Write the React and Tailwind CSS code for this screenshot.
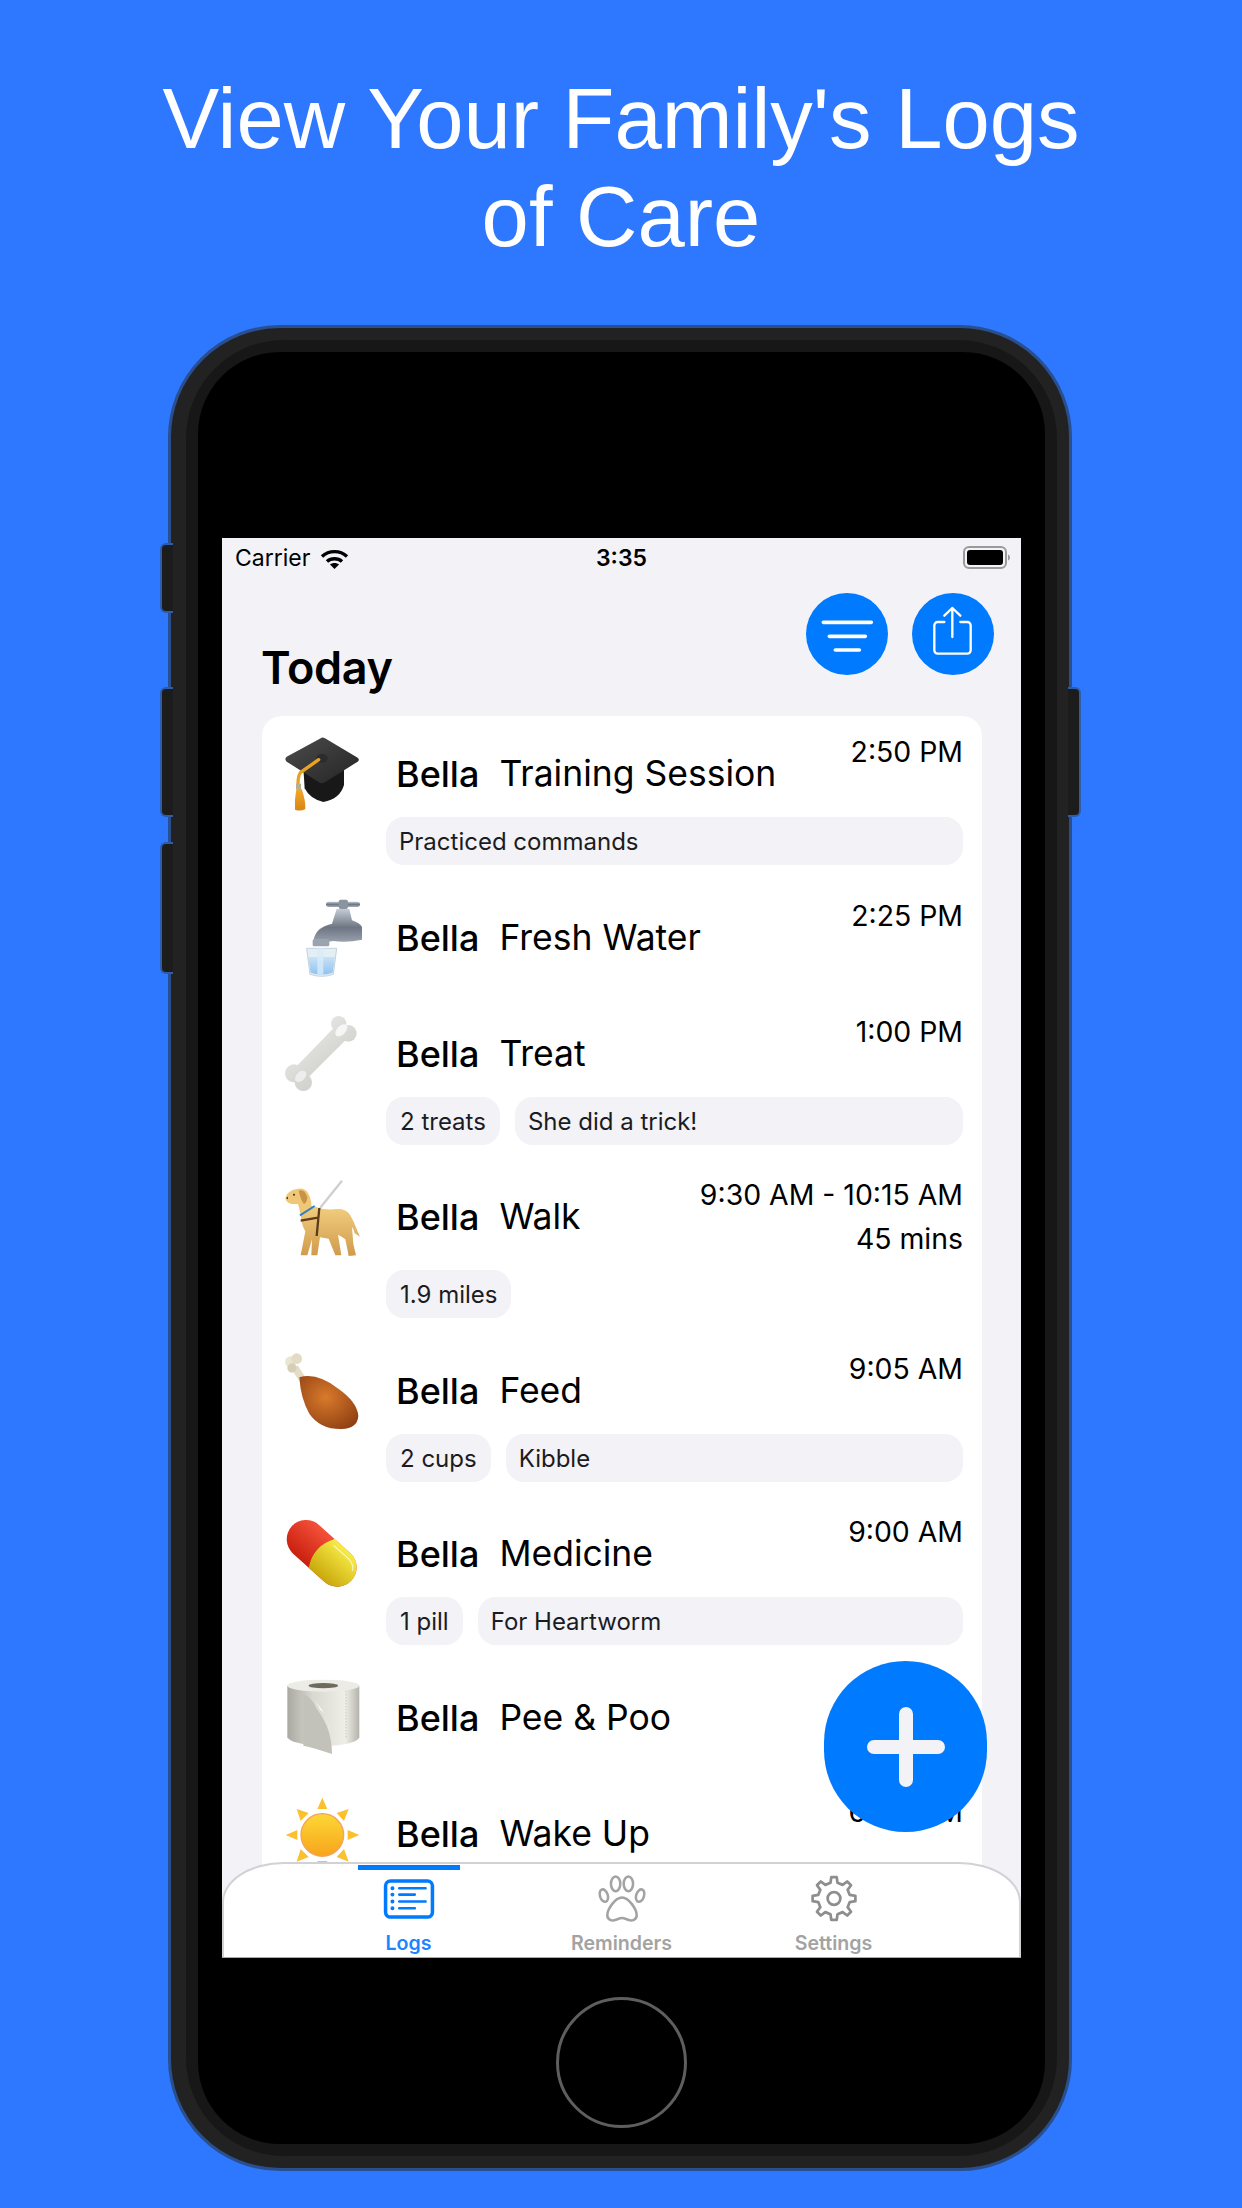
const LOGS = [
  { emoji: 'cap', title: 'Training Session', time: ['2:50 PM'], chips: ['Practiced commands'] },
  { emoji: 'water', title: 'Fresh Water', time: ['2:25 PM'], chips: [] },
  { emoji: 'bone', title: 'Treat', time: ['1:00 PM'], chips: ['2 treats', 'She did a trick!'] },
  { emoji: 'dog', title: 'Walk', time: ['9:30 AM - 10:15 AM', '45 mins'], chips: ['1.9 miles'] },
  { emoji: 'leg', title: 'Feed', time: ['9:05 AM'], chips: ['2 cups', 'Kibble'] },
  { emoji: 'pill', title: 'Medicine', time: ['9:00 AM'], chips: ['1 pill', 'For Heartworm'] },
  { emoji: 'roll', title: 'Pee & Poo', time: [], chips: [] },
  { emoji: 'sun', title: 'Wake Up', time: ['6:30 AM'], chips: [] },
]

function CapEmoji() {
  return (
    <>
      <defs>
        <linearGradient id="capTop" x1="0" y1="0" x2="1" y2="1">
          <stop offset="0" stopColor="#4c4c4c" />
          <stop offset="1" stopColor="#242424" />
        </linearGradient>
        <linearGradient id="tassel" x1="0" y1="0" x2="0" y2="1">
          <stop offset="0" stopColor="#f2a92c" />
          <stop offset="1" stopColor="#d98512" />
        </linearGradient>
      </defs>
      <path d="M100 130 L104 190 Q120 222 160 231 Q210 222 222 180 L222 130 Z" fill="#181818" />
      <path d="M155 38 Q160 37 165 40 L263 98 Q270 104 263 110 L165 172 Q155 178 147 172 L50 110 Q42 102 50 95 Z" fill="url(#capTop)" />
      <ellipse cx="156" cy="100" rx="17" ry="13" fill="#2c2c2c" />
      <path d="M146 104 L92 142 Q84 150 84 178" fill="none" stroke="#e9a324" strokeWidth="10" strokeLinecap="round" />
      <rect x="78" y="176" width="15" height="16" fill="#b7b08f" />
      <path d="M79 192 L95 192 Q107 225 106 252 Q92 260 75 254 Q73 225 79 192 Z" fill="url(#tassel)" />
    </>
  )
}

function WaterEmoji() {
  return (
    <g transform="translate(30 6)">
      <defs>
        <linearGradient id="chrome" x1="0" y1="0" x2="0" y2="1">
          <stop offset="0" stopColor="#c4ccd6" />
          <stop offset="0.5" stopColor="#6d7682" />
          <stop offset="1" stopColor="#a3acb8" />
        </linearGradient>
        <linearGradient id="glassFill" x1="0" y1="0" x2="0" y2="1">
          <stop offset="0" stopColor="#c8e2f7" />
          <stop offset="1" stopColor="#8fc3ee" />
        </linearGradient>
      </defs>
      <path d="M80 172 H170 L160 250 Q125 262 90 250 Z" fill="#e4eef5" stroke="#c5d2dc" strokeWidth="3" />
      <path d="M85 198 H165 L158 245 Q125 256 92 245 Z" fill="url(#glassFill)" />
      <rect x="112" y="172" width="18" height="78" fill="#d8ebfa" opacity="0.8" />
      <rect x="138" y="32" width="102" height="16" rx="8" fill="url(#chrome)" />
      <rect x="176" y="26" width="28" height="28" rx="6" fill="#8a93a0" />
      <path d="M170 54 H208 L216 88 Q240 96 246 108 V146 Q200 156 160 150 L144 152 V165 H102 V142 Q110 108 156 98 Z" fill="url(#chrome)" />
      <rect x="98" y="144" width="50" height="22" rx="5" fill="#9aa4b0" />
    </g>
  )
}

function BoneEmoji() {
  return (
    <>
      <defs>
        <linearGradient id="boneFill" gradientUnits="userSpaceOnUse" x1="60" y1="40" x2="240" y2="250">
          <stop offset="0" stopColor="#f0f0ee" />
          <stop offset="1" stopColor="#c4c4c0" />
        </linearGradient>
      </defs>
      <g fill="url(#boneFill)">
        <circle cx="206" cy="56" r="23" />
        <circle cx="235" cy="85" r="25" />
        <circle cx="72" cy="205" r="27" />
        <circle cx="100" cy="232" r="26" />
        <path d="M196 64 L228 104 L106 226 L74 190 Z" />
      </g>
      <ellipse cx="214" cy="76" rx="22" ry="13" fill="#fcfcfc" opacity="0.8" transform="rotate(-45 214 76)" />
      <ellipse cx="92" cy="214" rx="20" ry="13" fill="#fcfcfc" opacity="0.6" transform="rotate(-45 92 214)" />
    </>
  )
}

function DogEmoji() {
  return (
    <>
      <defs>
        <linearGradient id="dogFur" x1="0" y1="0" x2="0" y2="1">
          <stop offset="0" stopColor="#f2cd7e" />
          <stop offset="1" stopColor="#d09a4c" />
        </linearGradient>
      </defs>
      <path d="M150 120 L216 38" stroke="#cfcfcf" strokeWidth="7" />
      <path d="M92 140 L136 116 Q160 126 190 124 Q226 118 240 140 Q252 160 262 188 L270 206 L254 196 Q250 180 246 178 L250 228 L258 262 L236 264 L226 214 Q216 206 204 200 L214 262 L196 262 L176 212 L150 208 L142 262 L124 262 L126 214 L112 262 L92 262 L106 190 Q94 170 92 140 Z" fill="url(#dogFur)" />
      <path d="M46 92 L50 80 Q62 66 78 64 Q100 56 112 72 Q124 90 124 112 L132 122 L92 144 Q88 120 84 108 L66 108 Q52 106 46 92 Z" fill="#eec777" />
      <path d="M86 68 Q104 62 112 88 Q110 106 102 108 Q92 96 86 68 Z" fill="#c99347" />
      <circle cx="72" cy="80" r="3" fill="#3c2a12" />
      <path d="M48 90 L54 86 L54 94 Z" fill="#3c2a12" />
      <path d="M90 142 L134 114" stroke="#2f7fc4" strokeWidth="6" fill="none" />
      <path d="M92 158 L148 148 M148 120 L140 204" stroke="#5c3c1a" strokeWidth="7" fill="none" />
    </>
  )
}

function LegEmoji() {
  return (
    <>
      <defs>
        <radialGradient id="legMeat" cx="0.45" cy="0.4" r="0.7">
          <stop offset="0" stopColor="#d97a2c" />
          <stop offset="1" stopColor="#8e3f12" />
        </radialGradient>
      </defs>
      <path d="M100 116 L74 76" stroke="#e4dcc6" strokeWidth="22" />
      <circle cx="62" cy="60" r="17" fill="#ece5d2" />
      <circle cx="80" cy="50" r="16" fill="#e2dbc6" />
      <circle cx="66" cy="78" r="14" fill="#d6cfb8" />
      <path d="M88 106 Q140 90 205 140 Q262 180 265 222 Q262 260 215 261 Q150 262 118 215 Q92 170 88 106 Z" fill="url(#legMeat)" />
    </>
  )
}

function PillEmoji() {
  return (
    <>
      <defs>
        <linearGradient id="pillRed" x1="0" y1="0" x2="0" y2="1">
          <stop offset="0" stopColor="#f4513a" />
          <stop offset="1" stopColor="#c9200e" />
        </linearGradient>
        <linearGradient id="pillYellow" x1="0" y1="0" x2="0" y2="1">
          <stop offset="0" stopColor="#f7ec48" />
          <stop offset="1" stopColor="#c9a80c" />
        </linearGradient>
      </defs>
      <g transform="translate(155 145) rotate(42)">
        <rect x="-121" y="-58" width="242" height="116" rx="58" fill="url(#pillRed)" />
        <path d="M0 -58 Q-35 0 0 58 H63 A58 58 0 0 0 63 -58 Z" fill="url(#pillYellow)" />
        <path d="M10 -42 H70 Q96 -40 104 -22" fill="none" stroke="#fff" strokeWidth="4" opacity="0.6" />
      </g>
    </>
  )
}

function RollEmoji() {
  return (
    <>
      <defs>
        <linearGradient id="rollSide" x1="0" y1="0" x2="1" y2="0">
          <stop offset="0" stopColor="#a9a9a1" />
          <stop offset="0.35" stopColor="#d8d8d0" />
          <stop offset="0.8" stopColor="#efefe8" />
          <stop offset="1" stopColor="#b4b4ac" />
        </linearGradient>
      </defs>
      <path d="M52 50 V205 Q60 225 160 232 Q260 228 268 205 V50 Z" fill="url(#rollSide)" />
      <ellipse cx="160" cy="50" rx="108" ry="18" fill="#ecece6" />
      <ellipse cx="160" cy="50" rx="44" ry="8" fill="#6e6a5e" />
      <path d="M100 74 Q130 90 140 120 Q150 130 170 170 Q186 210 186 255 Q130 236 100 230 Z" fill="#c2c2ba" />
      <path d="M118 76 Q140 100 150 122 Q170 130 182 200 Q176 140 142 104 Z" fill="#f8f8f4" />
      <path d="M228 66 V210" stroke="#c6c6be" strokeWidth="3" strokeDasharray="4 5" />
    </>
  )
}

function SunEmoji() {
  return (
    <>
      <defs>
        <linearGradient id="sunFill" x1="0" y1="0" x2="0" y2="1">
          <stop offset="0" stopColor="#fdd835" />
          <stop offset="1" stopColor="#f7a41d" />
        </linearGradient>
      </defs>
      <path d="M157 38 L172 72 H142 Z M157 262 L172 228 H142 Z M47 150 L82 135 V165 Z M268 150 L233 135 V165 Z M80 72 L116 84 L92 108 Z M236 72 L200 84 L222 108 Z M80 230 L116 216 L92 192 Z M236 230 L200 216 L222 192 Z" fill="#fbc02d" />
      <circle cx="157" cy="150" r="64" fill="url(#sunFill)" stroke="#f4a35c" strokeWidth="4" />
    </>
  )
}

const EMOJI = {
  cap: CapEmoji,
  water: WaterEmoji,
  bone: BoneEmoji,
  dog: DogEmoji,
  leg: LegEmoji,
  pill: PillEmoji,
  roll: RollEmoji,
  sun: SunEmoji,
}

function gearPath() {
  const cx = 24
  const cy = 24
  const teeth = 8
  const pts = []
  for (let i = 0; i < teeth; i++) {
    const a = (i / teeth) * Math.PI * 2 - Math.PI / 2
    const s = (Math.PI * 2) / teeth
    const at = (off, r) => {
      const t = a + off * s
      return `${(cx + Math.cos(t) * r).toFixed(2)} ${(cy + Math.sin(t) * r).toFixed(2)}`
    }
    pts.push(at(-0.28, 16.5), at(-0.16, 22), at(0.16, 22), at(0.28, 16.5))
  }
  return `M${pts.join(' L')} Z`
}

function LogRow({ log }) {
  const Emoji = EMOJI[log.emoji]
  return (
    <div className="flex min-h-[116px]">
      <div className="w-[124px] h-[116px] shrink-0 pl-[8px] pt-[9px]">
        <svg width="110" height="110" viewBox="0 0 330 330" className="overflow-visible">
          <Emoji />
        </svg>
      </div>
      <div className={log.chips.length ? 'flex-1 min-w-0 pr-[19px] pb-[14.5px]' : 'flex-1 min-w-0 pr-[19px]'}>
        <div className="flex justify-between min-h-[92px] pl-[10px]">
          <div className="flex gap-[20px] pt-[35px] text-[35.5px] leading-[46px] text-black">
            <span className="font-medium text-[36px]">Bella</span>
            <span>{log.title}</span>
          </div>
          <div className="pt-[14px] text-right text-[28.4px] leading-[44px] text-black">
            {log.time.map((t) => (
              <div key={t}>{t}</div>
            ))}
          </div>
        </div>
        {log.chips.length > 0 && (
          <div className="flex gap-[15px] mt-[9px]">
            {log.chips.map((c, i) => (
              <div
                key={c}
                className={
                  i === log.chips.length - 1 && (log.chips.length > 1 || c.length > 10)
                    ? 'flex-1 h-[48px] rounded-[18px] bg-[#f2f2f7] px-[13px] pt-[2px] flex items-center text-[24px] text-[#1c1c1e]'
                    : 'h-[48px] rounded-[18px] bg-[#f2f2f7] px-[14px] pt-[2px] flex items-center text-[24px] text-[#1c1c1e]'
                }
              >
                {c}
              </div>
            ))}
          </div>
        )}
      </div>
    </div>
  )
}

function TabBar() {
  return (
    <div className="absolute bottom-0 left-0 right-0 h-[95px] bg-white border-t-2 border-x-2 border-[#d1d1d6] rounded-tl-[62px_40px] rounded-tr-[62px_40px] flex justify-center">
      <div className="absolute top-[1px] left-[134px] w-[102px] h-[5px] bg-[#007aff]" />
      <div className="w-[213px] flex flex-col items-center">
        <svg className="mt-[15px]" width="52" height="42" viewBox="0 0 52 42" fill="none" stroke="#007aff">
          <rect x="2" y="2" width="48" height="37" rx="5" strokeWidth="3.6" />
          <path d="M16 9.5H43M16 16H32M16 23H43M16 30H32" strokeWidth="2.6" strokeLinecap="round" />
          <path d="M9 9.5h.1M9 16h.1M9 23h.1M9 30h.1" strokeWidth="4" strokeLinecap="round" />
        </svg>
        <span className="mt-[9px] text-[19.6px] leading-[28px] font-semibold text-[#1d84ff]">Logs</span>
      </div>
      <div className="w-[213px] flex flex-col items-center">
        <svg className="mt-[11px]" width="48" height="48" viewBox="0 0 48 48" fill="none" stroke="#a3a3a3" strokeWidth="2.6">
          <ellipse cx="17.5" cy="9" rx="4.8" ry="7.5" />
          <ellipse cx="30.5" cy="9" rx="4.8" ry="7.5" />
          <ellipse cx="5.5" cy="21" rx="4" ry="6.5" transform="rotate(-18 5.5 21)" />
          <ellipse cx="42.5" cy="21" rx="4" ry="6.5" transform="rotate(18 42.5 21)" />
          <path d="M24 23C17 23 9 35 9 41C9 46 14 47 17 46C20 45 22 44 24 44C26 44 28 45 31 46C34 47 39 46 39 41C39 35 31 23 24 23Z" />
        </svg>
        <span className="mt-[7px] text-[19.6px] leading-[28px] font-semibold text-[#a3a3a3]">Reminders</span>
      </div>
      <div className="w-[213px] flex flex-col items-center pr-[2px]">
        <svg className="mt-[11px]" width="48" height="48" viewBox="0 0 48 48" fill="none" stroke="#8e8e8e" strokeWidth="2.8" strokeLinejoin="round">
          <path d={gearPath()} />
          <circle cx="24" cy="24" r="6.5" />
        </svg>
        <span className="mt-[7px] text-[19.6px] leading-[28px] font-semibold text-[#a3a3a3]">Settings</span>
      </div>
    </div>
  )
}

function Screen() {
  return (
    <div className="relative w-[799px] h-[1420px] overflow-hidden bg-[#f2f2f7] border-b border-[#aaaaaa] [font-family:Inter,sans-serif]">
      <div className="relative flex items-center justify-between h-[40px] pl-[13px] pr-[11px] text-black">
        <div className="flex items-center gap-[10px]">
          <span className="text-[23px]">Carrier</span>
          <svg width="29" height="21" viewBox="0 0 29 21" fill="none" stroke="#000" strokeWidth="3.4">
            <path d="M2 8.5C9 2 20 2 27 8.5" />
            <path d="M7 13.5C11 9.8 18 9.8 22 13.5" />
            <path d="M14.5 21L10 16.5C12.5 14.5 16.5 14.5 19 16.5Z" fill="#000" stroke="none" />
          </svg>
        </div>
        <span className="absolute left-0 right-0 text-center text-[23px] font-semibold">3:35</span>
        <svg width="47" height="24" viewBox="0 0 47 24">
          <rect x="1" y="1" width="42" height="21" rx="5" fill="none" stroke="#9a9a9a" strokeWidth="2" />
          <rect x="4" y="4" width="36" height="15" rx="3" fill="#000" />
          <path d="M45 8.5c1.5.5 2 2 2 3s-.5 2.5-2 3Z" fill="#9a9a9a" />
        </svg>
      </div>
      <div className="flex justify-between h-[138px] pl-[39px] pr-[27px]">
        <h1 className="self-end mb-[19px] text-[45px] leading-[58px] font-semibold tracking-[-0.3px] text-black">Today</h1>
        <div className="flex gap-[24px] mt-[15px]">
          <button className="w-[82px] h-[82px] rounded-full bg-[#007aff]">
            <svg width="82" height="82" viewBox="0 0 246 246" fill="none" stroke="#fff" strokeWidth="11" strokeLinecap="round">
              <path d="M52 88H196M70 130H178M88 171H160" />
            </svg>
          </button>
          <button className="w-[82px] h-[82px] rounded-full bg-[#007aff]">
            <svg width="82" height="82" viewBox="0 0 246 246" fill="none" stroke="#fff" strokeWidth="7" strokeLinecap="round" strokeLinejoin="round">
              <path d="M97 87H77a10 10 0 0 0-10 10V172a10 10 0 0 0 10 10H166a10 10 0 0 0 10-10V97a10 10 0 0 0-10-10H145" />
              <path d="M121 132V45M97 68L121 45L145 68" />
            </svg>
          </button>
        </div>
      </div>
      <div className="ml-[40px] mr-[39px] rounded-[20px] bg-white overflow-hidden">
        {LOGS.map((log) => (
          <LogRow key={log.title} log={log} />
        ))}
      </div>
      <button className="absolute left-[602px] top-[1123px] w-[163px] h-[171px] rounded-full bg-[#007aff] flex items-center justify-center">
        <svg width="80" height="82" viewBox="0 0 80 82" fill="none" stroke="#f2f2f7" strokeWidth="14" strokeLinecap="round">
          <path d="M40 8V74M8 41H72" />
        </svg>
      </button>
      <TabBar />
    </div>
  )
}

function SideButton({ className }) {
  return <div className={`absolute w-[13px] bg-[#1c1c1c] border-2 border-[#2f5ca8] ${className}`} />
}

export default function App() {
  return (
    <div className="w-[1242px] h-[2208px] overflow-hidden bg-[#2e78ff] flex flex-col items-center">
      <h1 className="mt-[70px] text-center text-white text-[85px] leading-[98px] [font-family:'Liberation_Sans',sans-serif]">
        View Your Family's Logs
        <br />
        of Care
      </h1>
      <div className="relative mt-[59px] mr-[2px] w-[904px] h-[1846px] rounded-[112px] bg-[#222222] border-[3px] border-[#2a4f8f] pl-[15px] pr-[12px] py-[12px]">
        <SideButton className="left-[-11px] top-[215px] h-[70px] rounded-l-[6px] border-r-0" />
        <SideButton className="left-[-11px] top-[359px] h-[130px] rounded-l-[6px] border-r-0" />
        <SideButton className="left-[-11px] top-[514px] h-[132px] rounded-l-[6px] border-r-0" />
        <SideButton className="right-[-12px] top-[359px] h-[130px] rounded-r-[6px] border-l-0" />
        <div className="w-full h-full rounded-[98px] bg-[#171717] p-[12px]">
          <div className="w-full h-full rounded-[82px] bg-black flex flex-col items-center pt-[186px]">
            <Screen />
            <div className="mt-[39px] w-[131px] h-[131px] rounded-full border-[3px] border-[#5e5e5e]" />
          </div>
        </div>
      </div>
    </div>
  )
}
